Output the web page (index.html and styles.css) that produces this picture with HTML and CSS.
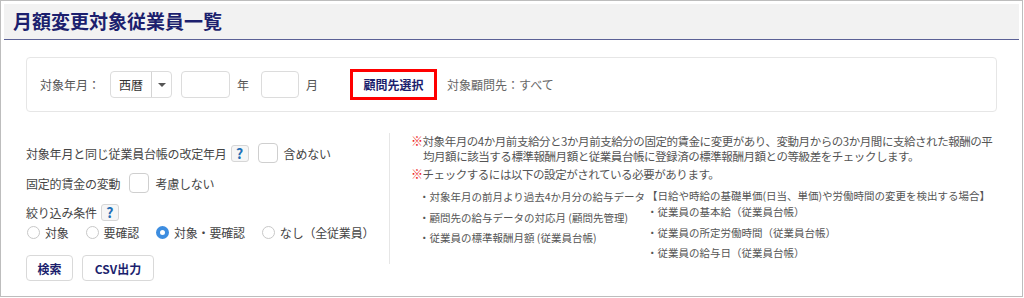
FILE: index.html
```
<!DOCTYPE html>
<html lang="ja">
<head>
<meta charset="utf-8">
<title>月額変更対象従業員一覧</title>
<link rel="stylesheet" href="styles.css">
</head>
<body>
<div class="frame">
	<div class="header">
		<h1 class="title">月額変更対象従業員一覧</h1>
	</div>
	<div class="content">
		<div class="filter">
			<span class="label">対象年月：</span>
			<div class="select">
				<span class="select-text">西暦</span>
				<span class="select-arrow"></span>
			</div>
			<div class="input input-year"></div>
			<span class="unit">年</span>
			<div class="input input-month"></div>
			<span class="unit">月</span>
			<button class="btn-client">顧問先選択</button>
			<span class="client">対象顧問先：すべて</span>
		</div>

		<div class="options">
			<div class="left">
				<div class="row row1">
					<span class="text">対象年月と同じ従業員台帳の改定年月</span>
					<span class="help">?</span>
					<span class="check"></span>
					<span class="check-label">含めない</span>
				</div>
				<div class="row row2">
					<span class="text">固定的賃金の変動</span>
					<span class="check"></span>
					<span class="check-label">考慮しない</span>
				</div>
				<div class="row row3">
					<span class="text">絞り込み条件</span>
					<span class="help">?</span>
				</div>
				<div class="radios">
					<label class="radio"><span class="dot"></span>対象</label>
					<label class="radio"><span class="dot"></span>要確認</label>
					<label class="radio"><span class="dot on"></span>対象・要確認</label>
					<label class="radio"><span class="dot"></span>なし（全従業員）</label>
				</div>
				<div class="buttons">
					<button class="btn btn-search">検索</button>
					<button class="btn btn-csv">CSV出力</button>
				</div>
			</div>

			<div class="right">
				<p class="note note1"><span class="mark">※</span>対象年月の4か月前支給分と3か月前支給分の固定的賃金に変更があり、変動月からの3か月間に支給された報酬の平均月額に該当する標準報酬月額と従業員台帳に登録済の標準報酬月額との等級差をチェックします。</p>
				<p class="note"><span class="mark">※</span>チェックするには以下の設定がされている必要があります。</p>
				<div class="lists">
					<ul class="list list-left">
						<li>・対象年月の前月より過去4か月分の給与データ</li>
						<li>・顧問先の給与データの対応月 (顧問先管理)</li>
						<li>・従業員の標準報酬月額 (従業員台帳)</li>
					</ul>
					<div class="list-right">
						<div class="list-head">【日給や時給の基礎単価(日当、単価)や労働時間の変更を検出する場合】</div>
						<ul class="list">
							<li>・従業員の基本給（従業員台帳）</li>
							<li>・従業員の所定労働時間（従業員台帳）</li>
							<li>・従業員の給与日（従業員台帳）</li>
						</ul>
					</div>
				</div>
			</div>
		</div>
	</div>
</div>
</body>
</html>
```

FILE: styles.css
```
body {
	margin: 0;
	background: #fff;
	font-family: "Noto Sans CJK JP", "Liberation Sans", sans-serif;
	color: #444;
}

.frame {
	box-sizing: border-box;
	width: 1023px;
	height: 297px;
	border: 1px solid #bdbdbd;
	padding: 3px;
	overflow: hidden;
}

.header {
	height: 36px;
	background: #f2f2f2;
	border-bottom: 1px solid #5b6196;
	display: flex;
	align-items: center;
	padding: 0 0 3px 9px;
	box-sizing: border-box;
}

.title {
	margin: 0;
	font-size: 19px;
	font-weight: bold;
	color: #1c1f6e;
	line-height: 1;
}

.content {
	padding: 17px 22px 0 22px;
}

/* search box */
.filter {
	box-sizing: border-box;
	height: 55px;
	border: 1px solid #e6e6e6;
	border-radius: 4px;
	display: flex;
	align-items: center;
	padding: 0 13px;
	font-size: 12px;
}

.label {
	color: #555;
	margin-right: 10px;
}

.select {
	box-sizing: border-box;
	width: 62px;
	height: 27px;
	border: 1px solid #dcdcdc;
	border-radius: 4px;
	display: flex;
	align-items: center;
}

.select-text {
	width: 41px;
	height: 25px;
	line-height: 25px;
	padding-left: 8px;
	box-sizing: border-box;
	border-right: 1px solid #d4d4d4;
	color: #333;
}

.select-arrow {
	margin-left: 6px;
	width: 0;
	height: 0;
	border-left: 4px solid transparent;
	border-right: 4px solid transparent;
	border-top: 4px solid #555;
}

.input {
	box-sizing: border-box;
	height: 27px;
	border: 1px solid #dcdcdc;
	border-radius: 4px;
}

.input-year {
	width: 49px;
	margin-left: 9px;
}

.input-month {
	width: 38px;
}

.unit {
	color: #555;
	margin: 0 12px 0 7px;
}

.btn-client {
	box-sizing: border-box;
	width: 87px;
	height: 31px;
	margin-left: 20px;
	border: 3px solid #ff0000;
	background: #fff;
	font-family: inherit;
	font-size: 12px;
	font-weight: bold;
	color: #1c1f6e;
	padding: 0;
}

.client {
	margin-left: 10px;
	color: #666;
}

/* options */
.options {
	display: flex;
	align-items: flex-start;
	margin-top: 21px;
}

.left {
	flex-shrink: 0;
	width: 363px;
	padding-top: 10px;
	font-size: 12px;
	letter-spacing: -0.2px;
	white-space: nowrap;
}

.row {
	display: flex;
	align-items: center;
}

.row2 {
	margin-top: 10px;
}

.row3 {
	margin-top: 11px;
}

.help {
	box-sizing: border-box;
	width: 18px;
	height: 17px;
	margin-left: 4px;
	border: 1px solid #d6d6d6;
	border-radius: 3px;
	background: #f6f6f6;
	color: #1f6fb5;
	font-size: 14px;
	font-weight: bold;
	line-height: 15px;
	text-align: center;
	letter-spacing: 0;
}

.check {
	box-sizing: border-box;
	width: 20px;
	height: 20px;
	margin-left: 9px;
	border: 1px solid #cfcfcf;
	border-radius: 4px;
	background: #fff;
}

.check-label {
	margin-left: 6px;
}

.radios {
	display: flex;
	align-items: center;
	margin-top: 3px;
	height: 16px;
}

.radio {
	display: flex;
	align-items: center;
	margin-right: 16px;
}

.dot {
	box-sizing: border-box;
	width: 13px;
	height: 13px;
	margin: 0 5px 0 1px;
	border: 1px solid #c8c8c8;
	border-radius: 50%;
	background: #fff;
}

.dot.on {
	border: 4px solid #3d8de0;
}

.buttons {
	display: flex;
	margin-top: 15px;
}

.btn {
	box-sizing: border-box;
	height: 26px;
	margin-right: 9px;
	border: 1px solid #d9d9d9;
	border-radius: 4px;
	background: #fff;
	font-family: inherit;
	font-size: 12px;
	font-weight: bold;
	color: #1c1f6e;
	padding: 0;
}

.btn-search {
	width: 47px;
}

.btn-csv {
	width: 72px;
}

.right {
	flex: 1;
	min-width: 0;
	border-left: 1px solid #e6e6e6;
	padding-left: 21px;
	font-size: 11.5px;
	color: #555;
}

.note {
	box-sizing: border-box;
	margin: 0;
	width: 586px;
	line-height: 15px;
	padding-left: 12px;
	text-indent: -12px;
	letter-spacing: -0.45px;
}

.note1 {
	margin-bottom: 2px;
}

.mark {
	color: #ee1c1c;
	font-size: 12px;
}

.lists {
	display: flex;
	font-size: 10.5px;
	white-space: nowrap;
}

.list {
	list-style: none;
	margin: 0;
	padding: 0;
	line-height: 20.5px;
}

.list-left {
	width: 228px;
	margin: 5px 0 0 8px;
}

.list-right {
	margin-top: 8px;
}

.list-head {
	line-height: 12px;
}
```
